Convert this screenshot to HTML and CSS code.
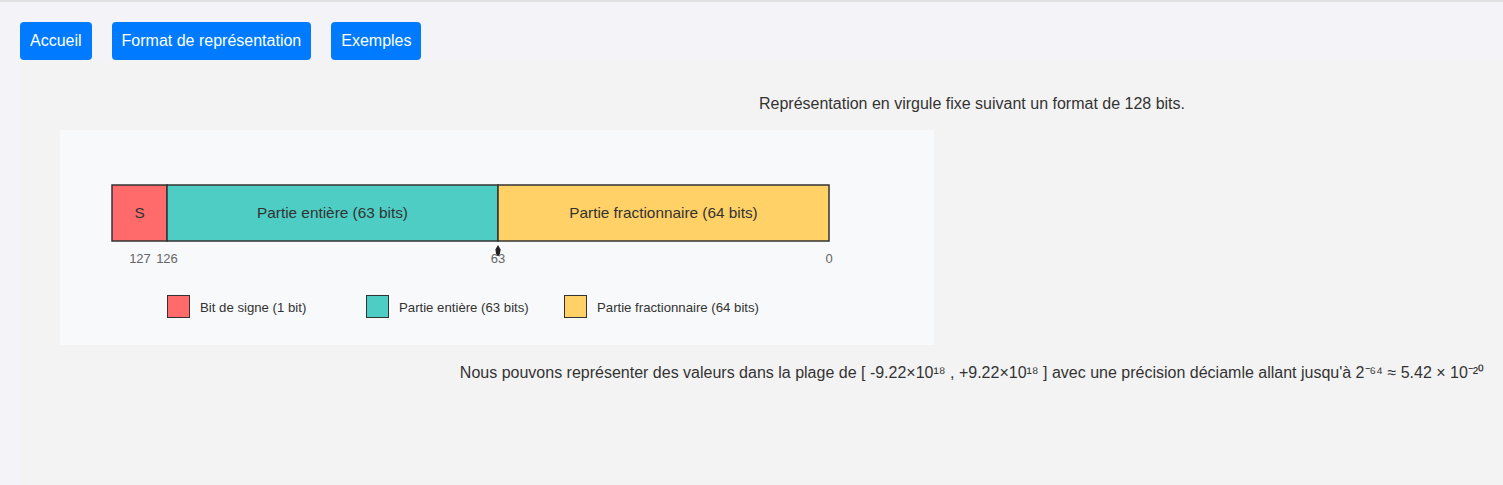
FILE: index.html
```html
<!DOCTYPE html>
<html lang="fr">
<head>
<meta charset="utf-8">
<title>Virgule fixe</title>
<link rel="stylesheet" href="styles.css">
</head>
<body>
<nav class="nav">
  <a class="btn" href="#">Accueil</a>
  <a class="btn" href="#">Format de représentation</a>
  <a class="btn" href="#">Exemples</a>
</nav>
<main class="panel">
  <p class="title">Représentation en virgule fixe suivant un format de 128 bits.</p>
  <div class="chart">
    <svg width="874" height="215" viewBox="0 0 874 215" xmlns="http://www.w3.org/2000/svg">
      <rect x="52" y="55" width="55" height="56" fill="#ff6b6b" stroke="#333" stroke-width="1.5"/>
      <rect x="107" y="55" width="331" height="56" fill="#4ecdc4" stroke="#333" stroke-width="1.5"/>
      <rect x="438" y="55" width="331" height="56" fill="#ffd166" stroke="#333" stroke-width="1.5"/>
      <g class="seg-label" text-anchor="middle">
        <text x="79.5" y="88.2">S</text>
        <text x="272.5" y="88.2">Partie entière (63 bits)</text>
        <text x="603.5" y="88.2">Partie fractionnaire (64 bits)</text>
      </g>
      <path d="M438 115 L440.6 119.5 L440 123.5 L438.6 126 L437.4 126 L436 123.5 L435.4 119.5 Z" fill="#222"/>
      <g class="bit-label" text-anchor="middle">
        <text x="80" y="132.7">127</text>
        <text x="107" y="132.7">126</text>
        <text x="438" y="132.7">63</text>
        <text x="769" y="132.7">0</text>
      </g>
      <rect x="107.5" y="165.5" width="22" height="22" fill="#ff6b6b" stroke="#333" stroke-width="1"/>
      <rect x="306.5" y="165.5" width="22" height="22" fill="#4ecdc4" stroke="#333" stroke-width="1"/>
      <rect x="504.5" y="165.5" width="22" height="22" fill="#ffd166" stroke="#333" stroke-width="1"/>
      <g class="legend-label">
        <text x="140" y="181.7">Bit de signe (1 bit)</text>
        <text x="339" y="181.7">Partie entière (63 bits)</text>
        <text x="537" y="181.7">Partie fractionnaire (64 bits)</text>
      </g>
    </svg>
  </div>
  <p class="range">Nous pouvons représenter des valeurs dans la plage de [ -9.22×10¹⁸ , +9.22×10¹⁸ ] avec une précision déciamle allant jusqu'à 2⁻⁶⁴ ≈ 5.42 × 10⁻²⁰</p>
</main>
</body>
</html>
```
FILE: styles.css
```css
body {
  margin: 0;
  background: #f4f4f8;
  border-top: 2px solid #dfdfe2;
  font-family: "Liberation Sans", Arial, sans-serif;
  color: #333;
  min-height: 483px;
}
.nav {
  display: flex;
  gap: 20px;
  padding: 20px 0 0 20px;
}
.btn {
  display: block;
  background: #007bff;
  color: #fff;
  text-decoration: none;
  font-size: 16px;
  line-height: 24px;
  padding: 7px 10px;
  border-radius: 4px;
}
.panel {
  margin-left: 20px;
  padding: 32px 0 0 40px;
  background: #f3f3f3;
  min-height: 393px;
}
.title {
  margin: 0;
  padding-left: 381px;
  text-align: center;
  font-size: 16px;
  line-height: 24px;
}
.chart {
  margin-top: 14px;
  width: 874px;
  height: 215px;
  background: #f8f9fa;
}
.chart svg {
  display: block;
}
.seg-label {
  font-family: "Liberation Sans", Arial, sans-serif;
  font-size: 15.35px;
  fill: #333;
}
.bit-label {
  font-family: "Liberation Sans", Arial, sans-serif;
  font-size: 13px;
  fill: #666;
}
.legend-label {
  font-family: "Liberation Sans", Arial, sans-serif;
  font-size: 13.2px;
  fill: #333;
}
.range {
  margin: 16px 0 0;
  padding-left: 381px;
  text-align: center;
  font-size: 16px;
  line-height: 24px;
}
```
